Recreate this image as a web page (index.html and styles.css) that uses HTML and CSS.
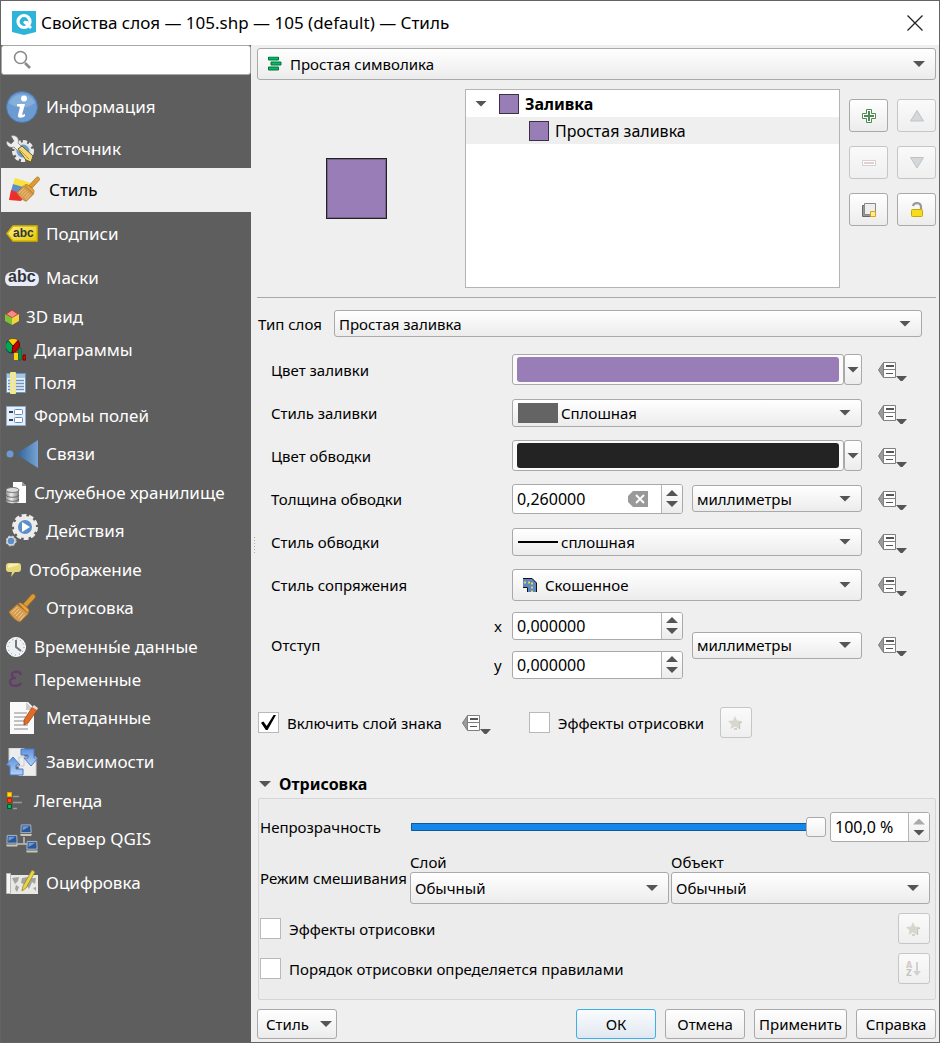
FILE: index.html
```html
<!DOCTYPE html>
<html lang="ru">
<head>
<meta charset="utf-8">
<title>Свойства слоя</title>
<link rel="stylesheet" href="styles.css">
</head>
<body>
<svg class="defs" width="0" height="0" aria-hidden="true">
  <defs>
    <linearGradient id="gold" x1="0" y1="0" x2="1" y2="1"><stop offset="0" stop-color="#fbf08a"/><stop offset="1" stop-color="#e6c800"/></linearGradient>
    <linearGradient id="blue" x1="0" y1="0" x2="1" y2="0"><stop offset="0" stop-color="#2f5f97"/><stop offset="1" stop-color="#76a3d3"/></linearGradient>
    <linearGradient id="metal" x1="0" y1="0" x2="1" y2="0"><stop offset="0" stop-color="#8c8c8c"/><stop offset=".4" stop-color="#efefef"/><stop offset="1" stop-color="#7c7c7c"/></linearGradient>
    <linearGradient id="arrow" x1="0" y1="0" x2="0" y2="1"><stop offset="0" stop-color="#5e93dd"/><stop offset="1" stop-color="#b5d0f5"/></linearGradient>
    <symbol id="ddo" viewBox="0 0 30 22">
      <path d="M5.500 3.500v15L.5 11z" fill="#9b9b9b" stroke="#7d7d7d"/>
      <path d="M5.500 3.500h12v15h-12z" fill="#fff" stroke="#808080"/>
      <path d="M5.500 10.500h12" stroke="#808080"/>
      <path d="M8 7h8" stroke="#555" stroke-width="2"/><path d="M8 14.500h7" stroke="#555"/>
      <path d="M18 17h11l-5.500 6z" fill="#555"/>
    </symbol>
    <symbol id="star" viewBox="0 0 16 16">
      <path d="M7 1l2 4.500 5 .5-3.500 3.500 1 4.500L7 11.500 2.500 14l1-4.500L0 6l5-.5z" fill="#d9d7cb"/>
      <path d="M6 14h3M11.500 14V9.500c0-2 1-2.500 2.500-2" fill="none" stroke="#c6c6c6" stroke-width="1.300"/>
    </symbol>
    <symbol id="brush" viewBox="0 0 32 32">
      <path d="M26 2c2-2 5 0 4 3l-9 10-4-3z" fill="#dc9a35" stroke="#a46c1e" stroke-width=".8"/>
      <path d="M12 11c2-1 4 0 5 1l5 4c2 2 2 4 0 6z" fill="#e8a540" stroke="#a46c1e" stroke-width=".8"/>
      <path d="M11 12l12 10-9 9c-3 0-10-6-12-11z" fill="#d59a4c" stroke="#a06c25" stroke-width=".8"/>
      <path d="M11 15l-6 6M13 17l-6 6M15 19l-6 6M17 21l-5 6M19 23l-5 6" stroke="#f0d2a2"/>
    </symbol>
    <symbol id="pc" viewBox="0 0 14 14">
      <path d="M1.500.5h11l.5 9H1z" fill="#2c5797" stroke="#b8c4d2"/><path d="M3 2h8l-8 5z" fill="#6f9bd1"/>
      <path d="M0 11h14l-1 2.500H1z" fill="#c9c6b2"/>
    </symbol>
  </defs>
</svg>

<div class="window">
  <header class="titlebar">
    <svg width="24" height="24" viewBox="0 0 24 24" aria-hidden="true"><path d="M0 0h24v21l-4 1-8 2-8-2-4-1z" fill="#2fb4d9"/><circle cx="12" cy="10.500" r="6" fill="none" stroke="#fff" stroke-width="3.200"/><path d="M12 10.500l7 6.500" stroke="#fff" stroke-width="3"/><path d="M12 11h4" stroke="#fff" stroke-width="2"/></svg>
    <h1 class="title">Свойства слоя — 105.shp — 105 (default) — Стиль</h1>
    <button class="close" type="button" aria-label="Закрыть"><svg width="16" height="16" viewBox="0 0 16 16"><path d="M.5.5l15 15M15.500.5l-15 15" stroke="#222" stroke-width="1.300"/></svg></button>
  </header>

  <div class="body">
    <aside class="sidebar">
      <label class="search">
        <svg width="20" height="20" viewBox="0 0 20 20" aria-hidden="true"><circle cx="7.500" cy="7.500" r="6" fill="none" stroke="#8a8a8a" stroke-width="1.600"/><path d="M12 13l5 5" stroke="#8a8a8a" stroke-width="2.600"/></svg>
        <input type="text" aria-label="Поиск">
      </label>
      <nav class="pages">
        <button class="page tall" type="button"><svg width="32" height="32" viewBox="0 0 32 32"><circle cx="16" cy="16" r="15.500" fill="#6b9bd0" stroke="#4879b4"/><path d="M3 12a14 14 0 0 1 26 0c-8 6-18 6-26 0z" fill="#86aedb"/><circle cx="18" cy="7.500" r="3" fill="#fff"/><path d="M11 13h8l-3 11 3-1v2c-2 2-8 3-7-1l2-8-3-1z" fill="#fff"/></svg>Информация</button>
        <button class="page mid" type="button"><svg width="28" height="28" viewBox="0 0 28 28"><circle cx="17" cy="16" r="9" fill="#6b9bd0" stroke="#ececec" stroke-width="4" stroke-dasharray="4 2"/><circle cx="17" cy="16" r="7.500" fill="#6b9bd0" stroke="#e4e4e4" stroke-width="2"/><path d="M5 1c5-2 9 3 7 7l8 8-4 4-8-8C4 14-1 10 1 6l4 3 3-3z" fill="#eee" stroke="#777" stroke-width=".7"/><path d="M12 14l4-3 11 10-2 6-5-2z" fill="#f1d978" stroke="#6b5a20"/><path d="M14 15l9 9" stroke="#b99b3c"/></svg>Источник</button>
        <button class="page tall current" type="button" aria-current="page"><svg width="35" height="32" viewBox="0 0 35 32"><path d="M9 4l16 5-4 5L7 10z" fill="#f9e23c"/><path d="M7 10l14 4-3 7L5 17z" fill="#5f8fca"/><path d="M5 16l14 5-4 6-12-1z" fill="#ef2d2d"/><use href="#brush" x="9" y="2" width="26" height="26"/></svg>Стиль</button>
        <button class="page tall" type="button"><svg width="32" height="18" viewBox="0 0 32 18"><path d="M7 1h24v15H7L1 8.500z" fill="url(#gold)" stroke="#d5b400" stroke-width="1.500"/><text x="7" y="12" class="abc-label">abc</text></svg>Подписи</button>
        <button class="page tall" type="button"><svg class="wide-icon" width="34" height="24" viewBox="0 0 34 24"><path d="M5 20q-5-1-5-7t6-7h4q1-4 5-4t6 4h7q6 1 6 7t-5 7z" fill="#e8ecfa"/><text x="3" y="16" class="abc-mask">abc</text></svg>Маски</button>
        <button class="page" type="button"><svg class="cube" width="14" height="16" viewBox="0 0 14 16"><path d="M7 1l6 4-6 4-6-4z" fill="#f38b8b" stroke="#b33"/><path d="M0 5l7 4v7l-7-4z" fill="#7bc331"/><path d="M14 5L7 9v7l7-4z" fill="#f3d53b"/></svg>3D вид</button>
        <button class="page" type="button"><svg width="20" height="22" viewBox="0 0 20 22"><path d="M7 7L2 1.500a8 8 0 0 1 10 0z" fill="#ffcf00" stroke="#8a6d00" stroke-width=".6"/><path d="M7 7L2 1.500A7 7 0 0 0 6 14z" fill="#00a651" stroke="#045"/><path d="M7 7l5-5.500c3 4 2 10-6 12.500z" fill="#c30000" stroke="#600"/><path d="M8 14h4v7H8z" fill="#ffcf00"/><path d="M13 9h2v12h-2z" fill="#0b6" stroke="#063"/><path d="M17 16h3v5h-3z" fill="#d00" stroke="#700"/></svg>Диаграммы</button>
        <button class="page" type="button"><svg width="20" height="22" viewBox="0 0 20 22"><path d="M.5 1.500h19v19H.5z" fill="#edf2f7" stroke="#6d95c0"/><path d="M1 2h18v4H1z" fill="#a5c5e6"/><path d="M2 8.500h16M2 11.500h16M2 14.500h16M2 17.500h16" stroke="#6d95c0" stroke-width="1.300"/><path d="M4.500.5h5v21h-5z" fill="#e9e3c0" stroke="#f6ee59"/></svg>Поля</button>
        <button class="page" type="button"><svg width="20" height="20" viewBox="0 0 20 20"><path d="M.5.5h19v19H.5z" fill="#e9eff5" stroke="#8ab0d8"/><path d="M3 6h4M3 14h4" stroke="#345" stroke-width="2"/><rect x="8.500" y="3.500" width="8" height="5" rx="1" fill="#fff" stroke="#5b8cc4"/><rect x="8.500" y="11.500" width="8" height="5" rx="1" fill="#fff" stroke="#5b8cc4"/></svg>Формы полей</button>
        <button class="page tall" type="button"><svg width="32" height="28" viewBox="0 0 32 28"><circle cx="4" cy="14" r="3.500" fill="#6b9bd0"/><path d="M32 0v28L10 14z" fill="url(#blue)"/></svg>Связи</button>
        <button class="page" type="button"><svg width="20" height="22" viewBox="0 0 20 22"><path d="M7 0h9l4 4v17H7z" fill="#fff"/><path d="M16 0v4h4z" fill="#999"/><path d="M0 8v11c0 3 13 3 13 0V8z" fill="url(#metal)"/><ellipse cx="6.500" cy="8" rx="6.500" ry="2.500" fill="#ddd" stroke="#777"/><path d="M0 13c1 3 12 3 13 0M0 17c1 3 12 3 13 0" fill="none" stroke="#666"/></svg>Служебное хранилище</button>
        <button class="page tall" type="button"><svg width="32" height="34" viewBox="0 0 32 34"><circle cx="19" cy="13" r="11" fill="none" stroke="#ececec" stroke-width="4" stroke-dasharray="4.600 2.300"/><circle cx="19" cy="13" r="9" fill="#5c8fc9" stroke="#ececec" stroke-width="4"/><path d="M16 8l8 5-8 5z" fill="#fff"/><circle cx="5" cy="27" r="4" fill="#5c8fc9" stroke="#ddd" stroke-width="1.500"/><circle cx="5" cy="27" r="5" fill="none" stroke="#ddd" stroke-dasharray="2 2"/></svg>Действия</button>
        <button class="page" type="button"><svg width="15" height="16" viewBox="0 0 15 16"><path d="M3 1h9q3 0 3 3v3q0 3-3 3H9l-4 5 1-5H3Q0 10 0 7V4q0-3 3-3z" fill="#e6d878"/><path d="M2 4q0-2 2-2h7q2 0 2 1l-11 3z" fill="#f6f0b4"/></svg>Отображение</button>
        <button class="page tall" type="button"><svg width="32" height="32" viewBox="0 0 32 32"><use href="#brush" x="1" y="1" width="30" height="30"/></svg>Отрисовка</button>
        <button class="page" type="button"><svg width="20" height="20" viewBox="0 0 20 20"><circle cx="10" cy="10" r="9.500" fill="#eef1f3" stroke="#fff"/><circle cx="10" cy="10" r="8" fill="none" stroke="#6a93bd" stroke-dasharray="1 3.200"/><path d="M10 3v7l5 4" fill="none" stroke="#777" stroke-width="2"/></svg>Временны́е данные</button>
        <button class="page" type="button"><svg width="20" height="22" viewBox="0 0 20 22"><path d="M15 6c-1-5-10-4-9 0 0 2 2 3 4 3-4 0-6 2-6 4 0 5 9 5 11 1" fill="none" stroke="#653a6c" stroke-width="2.200"/></svg>Переменные</button>
        <button class="page tall" type="button"><svg width="32" height="32" viewBox="0 0 32 32"><path d="M4 0h18l6 6v26H4z" fill="#fafafa"/><path d="M20 0v8h8z" fill="#ccc"/><path d="M8 11h13M8 15h12M8 19h11M8 23h14M8 27h14" stroke="#b0b0b0" stroke-width="1.500"/><path d="M27 4l5 3-10 14-4 2v-5z" fill="#e06a26" stroke="#a8481a" stroke-width=".8"/><path d="M28 3l4 3-1 2-5-3z" fill="#ddd"/></svg>Метаданные</button>
        <button class="page tall" type="button"><svg width="32" height="28" viewBox="0 0 32 28"><path d="M3 0h15v18H3zM13 9h17v19H13z" fill="#ededed" stroke="#ccc"/><path d="M15 1h13v9h4l-7 8-7-8h4V7h-7z" fill="url(#arrow)" stroke="#4a7bc4"/><path d="M7 9l7 8h-4v4h7v6H4V17H0z" fill="url(#arrow)" stroke="#4a7bc4"/></svg>Зависимости</button>
        <button class="page" type="button"><svg width="20" height="20" viewBox="0 0 20 20"><path d="M7 5.500h6M7 11.500h9M7 17.500h4" stroke="#999" stroke-width="1.500"/><path d="M1.500 1.500h4v4h-4z" fill="#ffe600" stroke="#f90"/><path d="M1.500 7.500h4v4h-4z" fill="#f40" stroke="#b20"/><path d="M1.500 13.500h4v4h-4z" fill="#0b5" stroke="#053"/></svg>Легенда</button>
        <button class="page tall" type="button"><svg width="32" height="30" viewBox="0 0 32 30"><path d="M18 13v7M10 20h14" stroke="#aaa" stroke-width="2"/><use href="#pc" x="14" y="0" width="12" height="13"/><use href="#pc" x="0" y="10" width="12" height="14"/><use href="#pc" x="20" y="16" width="12" height="14"/></svg>Сервер QGIS</button>
        <button class="page tall" type="button"><svg width="32" height="26" viewBox="0 0 32 26"><path d="M2 5h30v19H2z" fill="#e9e9e4"/><path d="M.5 3.500h4v20h-4z" fill="#f7f7f7" stroke="#bbb"/><path d="M6 8l7-1-1 4-3 3zM10 15l3 2-2 5-2-3zM16 8l6-1 5 3-4 9-3-4-5-2zM24 8h6l-1 6-3-2zM27 18l3-1v4z" fill="#a3a3a0"/><path d="M26 0l3 2-9 16-4 3 1-5z" fill="#e8d34a" stroke="#97862a" stroke-width=".8"/></svg>Оцифровка</button>
      </nav>
    </aside>

    <main class="main">
      <span class="combo big with-icon">
        <svg class="lead" width="15" height="15" viewBox="0 0 15 15"><path d="M1.500.5h10v3h-10zM4 5.500h10v3H4zM1.500 10.500h10v3h-10z" fill="#0b6" stroke="#04713b"/></svg>
        <select aria-label="Тип символики"><option>Простая символика</option></select>
      </span>

      <section class="symbol">
        <div class="preview"><div class="swatch"></div></div>
        <ul class="tree">
          <li class="node root"><i class="caret"></i><i class="chip"></i><b>Заливка</b></li>
          <li class="node child"><i class="chip"></i>Простая заливка</li>
        </ul>
        <div class="tools">
          <button class="tool" type="button" aria-label="Добавить"><svg width="16" height="16" viewBox="0 0 16 16"><path d="M5.500 1.500h5v4h4v5h-4v4h-5v-4h-4v-5h4z" fill="#fff" stroke="#4f8a55"/><path d="M8 3v10M3 8h10" stroke="#4f8a55" stroke-width="2"/></svg></button>
          <button class="tool" type="button" aria-label="Выше" disabled><svg width="16" height="16" viewBox="0 0 16 16"><path d="M8 2.500l6.500 10.500h-13z" fill="#d5d8da" stroke="#c0c3c5"/></svg></button>
          <button class="tool" type="button" aria-label="Удалить" disabled><svg width="16" height="16" viewBox="0 0 16 16"><path d="M1.500 5.500h13v5h-13z" fill="#fff" stroke="#d9cfcf"/><path d="M3 8h10" stroke="#e0d2d2" stroke-width="2"/></svg></button>
          <button class="tool" type="button" aria-label="Ниже" disabled><svg width="16" height="16" viewBox="0 0 16 16"><path d="M8 13L1.500 2.500h13z" fill="#d5d8da" stroke="#c0c3c5"/></svg></button>
          <button class="tool" type="button" aria-label="Дублировать"><svg width="16" height="16" viewBox="0 0 16 16"><path d="M1.500 3.500h11v11h-11z" fill="#999a93" stroke="#666"/><path d="M3.500 1.500h11v11h-11z" fill="#eee" stroke="#888"/><path d="M9.500 9.500h5v5h-5z" fill="#fbe9a6" stroke="#d7a800"/></svg></button>
          <button class="tool" type="button" aria-label="Блокировка цвета"><svg width="16" height="16" viewBox="0 0 16 16"><path d="M4 4c1-4 8-4 8 1v3" fill="none" stroke="#999" stroke-width="2.200"/><rect x="2.500" y="7.500" width="11" height="7" rx="1" fill="#f5dc1e" stroke="#c9a800"/></svg></button>
        </div>
      </section>

      <section class="layer">
        <div class="type-row">
          <label for="layer-type">Тип слоя</label>
          <span class="combo slim"><select id="layer-type"><option>Простая заливка</option></select></span>
        </div>

        <div class="form">
          <span>Цвет заливки</span>
          <div class="color"><button class="color-btn" type="button" aria-label="Цвет заливки"><i class="fill violet"></i></button><button class="drop" type="button" aria-label="Меню цвета заливки"><i class="caret"></i></button></div>
          <button class="ddo" type="button" aria-label="Переопределение"><svg width="30" height="22"><use href="#ddo"/></svg></button>

          <label for="fill-style">Стиль заливки</label>
          <span class="combo with-swatch"><i class="lead gray"></i><select id="fill-style"><option>Сплошная</option></select></span>
          <button class="ddo" type="button" aria-label="Переопределение"><svg width="30" height="22"><use href="#ddo"/></svg></button>

          <span>Цвет обводки</span>
          <div class="color"><button class="color-btn" type="button" aria-label="Цвет обводки"><i class="fill dark"></i></button><button class="drop" type="button" aria-label="Меню цвета обводки"><i class="caret"></i></button></div>
          <button class="ddo" type="button" aria-label="Переопределение"><svg width="30" height="22"><use href="#ddo"/></svg></button>

          <label for="stroke-width">Толщина обводки</label>
          <div class="pair">
            <div class="spin roomy"><input id="stroke-width" type="text" value="0,260000"><button class="clear" type="button" aria-label="Очистить"><svg width="20" height="16" viewBox="0 0 20 16"><path d="M5 0h15v16H5L0 11V5z" fill="#999"/><path d="M8 4l8 8M16 4l-8 8" stroke="#fff" stroke-width="1.800"/></svg></button><span class="steps"><button class="up" type="button" aria-label="Больше"></button><button class="down" type="button" aria-label="Меньше"></button></span></div>
            <span class="combo slim"><select aria-label="Единицы толщины"><option>миллиметры</option></select></span>
          </div>
          <button class="ddo" type="button" aria-label="Переопределение"><svg width="30" height="22"><use href="#ddo"/></svg></button>

          <label for="stroke-style">Стиль обводки</label>
          <span class="combo with-swatch"><i class="lead line"></i><select id="stroke-style"><option>сплошная</option></select></span>
          <button class="ddo" type="button" aria-label="Переопределение"><svg width="30" height="22"><use href="#ddo"/></svg></button>

          <label for="join-style">Стиль сопряжения</label>
          <span class="combo big with-icon"><svg class="lead" width="16" height="16" viewBox="0 0 16 16"><path d="M1 1h9l5 5v9H6V10H1z" fill="#5b87c5"/><path d="M1 1.500h9l4.500 4.500v9M1 10.500h4.500V15" fill="none" stroke="#111"/><path d="M2 5.500h8V15" fill="none" stroke="#f2d33a" stroke-width="2" stroke-dasharray="2 2"/></svg><select id="join-style"><option>Скошенное</option></select></span>
          <button class="ddo" type="button" aria-label="Переопределение"><svg width="30" height="22"><use href="#ddo"/></svg></button>

          <span>Отступ</span>
          <div class="pair">
            <div class="offsets">
              <div class="axis"><label for="offset-x">x</label><div class="spin"><input id="offset-x" type="text" value="0,000000"><span class="steps"><button class="up" type="button" aria-label="Больше"></button><button class="down" type="button" aria-label="Меньше"></button></span></div></div>
              <div class="axis"><label for="offset-y">y</label><div class="spin"><input id="offset-y" type="text" value="0,000000"><span class="steps"><button class="up" type="button" aria-label="Больше"></button><button class="down" type="button" aria-label="Меньше"></button></span></div></div>
            </div>
            <span class="combo slim"><select aria-label="Единицы отступа"><option>миллиметры</option></select></span>
          </div>
          <button class="ddo" type="button" aria-label="Переопределение"><svg width="30" height="22"><use href="#ddo"/></svg></button>
        </div>

        <div class="enable-row">
          <label class="check"><input type="checkbox" checked>Включить слой знака</label>
          <button class="ddo" type="button" aria-label="Переопределение"><svg width="30" height="22"><use href="#ddo"/></svg></button>
          <label class="check effects"><input type="checkbox">Эффекты отрисовки</label>
          <button class="small-tool" type="button" aria-label="Настроить эффекты" disabled><svg width="16" height="16"><use href="#star"/></svg></button>
        </div>
      </section>

      <section class="render">
        <h2 class="group-title"><i class="caret"></i>Отрисовка</h2>
        <div class="group">
          <div class="opacity-row">
            <label for="opacity">Непрозрачность</label>
            <input id="opacity" class="slider" type="range" min="0" max="100" value="100">
            <div class="spin roomy percent"><input type="text" value="100,0 %" aria-label="Непрозрачность, %"><span class="steps"><button class="up" type="button" aria-label="Больше" disabled></button><button class="down" type="button" aria-label="Меньше"></button></span></div>
          </div>
          <div class="blend-row">
            <span>Режим смешивания</span>
            <label class="blend">Слой<span class="combo big"><select><option>Обычный</option></select></span></label>
            <label class="blend">Объект<span class="combo big"><select><option>Обычный</option></select></span></label>
          </div>
          <div class="option-row">
            <label class="check"><input type="checkbox">Эффекты отрисовки</label>
            <button class="small-tool" type="button" aria-label="Настроить эффекты" disabled><svg width="16" height="16"><use href="#star"/></svg></button>
          </div>
          <div class="option-row">
            <label class="check"><input type="checkbox">Порядок отрисовки определяется правилами</label>
            <button class="small-tool" type="button" aria-label="Настроить порядок" disabled><svg width="16" height="16" viewBox="0 0 16 16"><text x="0" y="7" class="sort-top">A</text><text x="0" y="15" class="sort-low">Z</text><path d="M10 1h2v9h3l-4 5-4-5h3z" fill="#cfd2d4"/></svg></button>
          </div>
        </div>
      </section>

      <footer class="actions">
        <button class="btn menu" type="button">Стиль<i class="caret"></i></button>
        <button class="btn primary" type="button">ОК</button>
        <button class="btn" type="button">Отмена</button>
        <button class="btn" type="button">Применить</button>
        <button class="btn" type="button">Справка</button>
      </footer>
      <i class="splitter"></i>
    </main>
  </div>
</div>
</body>
</html>
```
FILE: styles.css
```css
* { box-sizing: border-box; }
body {
  margin: 0;
  font: 15px/20px "Noto Sans", "Open Sans", sans-serif;
  color: #000;
  background: #efefef;
}
button, input, select { font: inherit; color: inherit; margin: 0; }
button { padding: 0; border: 0; background: none; }
svg { display: block; flex: none; }
.defs { position: absolute; }

.window {
  display: flex;
  flex-direction: column;
  min-height: 100vh;
  border: 1px solid #646464;
}
.titlebar {
  display: flex;
  align-items: center;
  height: 44px;
  padding: 0 16px 0 11px;
  background: #fff;
}
.title { flex: 1; margin: 0 0 0 5px; font-size: 17px; font-weight: 400; line-height: 24px; }
.body { display: flex; flex: 1; }

/* Sidebar */
.sidebar { flex: none; width: 250px; background: #5e5e5e; }
.search {
  display: flex;
  align-items: center;
  height: 30px;
  padding-left: 11px;
  border: 1px solid #a8a8a8;
  border-radius: 3px;
  background: #fff;
}
.search input { flex: 1; min-width: 0; border: 0; outline: 0; background: none; }
.pages { padding-top: 10px; }
.page {
  display: flex;
  align-items: center;
  gap: 8px;
  width: 100%;
  height: 33px;
  padding-left: 5px;
  font-size: 17px;
  line-height: 24px;
  color: #fff;
  text-align: left;
}
.page.mid { height: 39px; }
.page.tall { height: 44px; }
.page.current { background: #efefef; color: #000; }
.wide-icon, .cube { margin-left: -1px; margin-right: -1px; }
.abc-label { font: bold 12px "Liberation Sans", sans-serif; fill: #333; }
.abc-mask { font: bold 16px "Liberation Sans", sans-serif; fill: #333; }

/* Shared controls */
.caret {
  display: block;
  flex: none;
  width: 12px;
  height: 6px;
  background: #555;
  clip-path: polygon(0 0, 100% 0, 50% 100%);
}
.combo { position: relative; display: block; min-width: 0; }
.combo select {
  display: block;
  width: 100%;
  height: 28px;
  padding: 0 28px 0 4px;
  border: 1px solid #a9a9a9;
  border-radius: 3px;
  background: linear-gradient(#fff, #ececec);
  appearance: none;
}
.combo::after {
  content: "";
  position: absolute;
  right: 11px;
  top: 50%;
  width: 12px;
  height: 6px;
  margin-top: -3px;
  background: #555;
  clip-path: polygon(0 0, 100% 0, 50% 100%);
  pointer-events: none;
}
.combo.slim select { height: 27px; }
.combo.big select { height: 32px; }
.combo.with-icon select { padding-left: 32px; }
.combo.with-swatch select { padding-left: 48px; }
.lead { position: absolute; left: 10px; top: 50%; transform: translateY(-50%); pointer-events: none; }
.lead.gray { left: 6px; width: 40px; height: 20px; background: #646464; }
.lead.line { left: 6px; width: 40px; height: 2px; background: #000; }

.spin {
  display: flex;
  width: 171px;
  height: 28px;
  border: 1px solid #a9a9a9;
  border-radius: 3px;
  background: #fff;
  overflow: hidden;
}
.spin.roomy { height: 30px; }
.spin.percent { width: 100px; }
.spin input { flex: 1; min-width: 0; padding: 0 0 0 4px; border: 0; outline: 0; background: none; font-size: 16px; }
.clear { display: flex; align-items: center; margin-right: 13px; }
.steps {
  display: flex;
  flex-direction: column;
  width: 21px;
  border-left: 1px solid #b5b5b5;
  background: linear-gradient(#fff, #ececec);
}
.up, .down { display: flex; flex: 1; justify-content: center; }
.up { align-items: flex-end; padding-bottom: 2px; }
.down { align-items: flex-start; padding-top: 3px; }
.up::before, .down::before { content: ""; width: 12px; height: 6px; background: #555; }
.up::before { clip-path: polygon(50% 0, 100% 100%, 0 100%); }
.down::before { clip-path: polygon(0 0, 100% 0, 50% 100%); }
.up:disabled::before { background: #aaa; }

.check { display: flex; align-items: center; gap: 8px; }
.check input {
  flex: none;
  display: grid;
  place-items: center;
  width: 21px;
  height: 21px;
  border: 1px solid #b9b9b9;
  background: #fff;
  appearance: none;
}
.check input:checked::before {
  content: "";
  width: 15px;
  height: 15px;
  background: #000;
  clip-path: polygon(0 52%, 16% 44%, 38% 74%, 84% 0, 100% 0, 44% 100%, 32% 100%);
}

.tool, .small-tool {
  display: grid;
  place-items: center;
  width: 39px;
  height: 33px;
  border: 1px solid #a9a9a9;
  border-radius: 3px;
  background: linear-gradient(#fff, #ececec);
}
.small-tool { width: 32px; height: 31px; }
.tool:disabled, .small-tool:disabled { border-color: #c6c6c6; background: linear-gradient(#fafafa, #efefef); }

/* Main panel */
.main {
  position: relative;
  display: flex;
  flex: 1;
  flex-direction: column;
  min-width: 0;
  padding: 3px 3px 2px 6px;
}
.splitter {
  position: absolute;
  left: 3px;
  top: 492px;
  width: 1px;
  height: 17px;
  background: repeating-linear-gradient(#aaa 0 1px, transparent 1px 3px);
}
.symbol { display: flex; padding: 9px 0; border-bottom: 1px solid #a9a9a9; }
.preview { display: grid; flex: none; place-items: center; width: 199px; margin-right: 9px; }
.swatch { width: 61px; height: 61px; border: 1px solid #232323; background: #987db7; box-shadow: inset 0 0 0 1px #75618c; }
.tree {
  flex: 1;
  height: 199px;
  margin: 0 9px 0 0;
  padding: 0;
  border: 1px solid #b4b4b4;
  background: #fff;
  list-style: none;
}
.node { display: flex; align-items: center; gap: 6px; height: 27px; padding-left: 9px; font-size: 16px; }
.root .chip { margin-left: 6px; }
.child { padding-left: 63px; background: #efefef; }
.chip { width: 20px; height: 20px; border: 1px solid #3b3147; background: #987db7; }
.tools {
  display: grid;
  grid-template-columns: 39px 39px;
  gap: 14px 9px;
  align-content: start;
  padding-top: 10px;
}

.type-row { display: flex; align-items: center; gap: 9px; padding: 12px 14px 0 1px; }
.type-row label { min-width: 67px; }
.type-row .combo { flex: 1; }
.form {
  display: grid;
  grid-template-columns: 241px 1fr 74px;
  grid-template-rows: repeat(6, 43px) 78px;
  align-items: center;
  padding: 11px 0 0 14px;
}
.form .ddo { padding-left: 16px; }
.form > .combo, .color, .pair { min-width: 0; }
.color { display: flex; height: 31px; }
.color-btn { flex: 1; padding: 2px 4px; border: 1px solid #a9a9a9; border-radius: 3px; background: #fafafa; }
.fill { display: block; height: 25px; border-radius: 3px; }
.violet { background: #987db7; }
.dark { background: #232323; }
.drop {
  display: grid;
  place-items: center;
  width: 18px;
  border: 1px solid #a9a9a9;
  border-radius: 3px;
  background: linear-gradient(#fff, #ececec);
}
.pair { display: flex; align-items: center; gap: 9px; }
.pair .combo { flex: 1; }
.offsets { display: grid; gap: 11px; margin-left: -18px; }
.axis { display: flex; align-items: center; }
.axis label { width: 18px; }

.enable-row { display: flex; align-items: center; height: 31px; margin-top: 23px; padding-left: 1px; }
.enable-row .ddo { margin: 0 37px 0 20px; }
.enable-row .small-tool { margin-left: 16px; }

.group-title { display: flex; align-items: center; gap: 8px; margin: 36px 0 4px 2px; font-size: 16px; line-height: 20px; }
.group { margin-left: 1px; padding: 13px 5px 15px 1px; border: 1px solid #d6d6d6; border-radius: 2px; background: #ececec; }
.opacity-row { display: grid; grid-template-columns: 151px 1fr 100px; column-gap: 4px; align-items: center; }
.opacity-row label { margin-right: -4px; }
.slider { width: calc(100% + 4px); height: 20px; margin-left: -4px; background: none; appearance: none; }
.slider::-webkit-slider-runnable-track { height: 8px; border-radius: 1px; background: #1488ea; box-shadow: inset 0 0 0 1px #0f5a9c; }
.slider::-webkit-slider-thumb {
  width: 20px;
  height: 20px;
  margin-top: -6px;
  border: 1px solid #a9a9a9;
  border-radius: 3px;
  background: linear-gradient(#fff, #f0f0f0);
  appearance: none;
}
.blend-row { display: grid; grid-template-columns: 148px 1fr 1fr; gap: 2px; align-items: center; margin: 10px 0 9px; }
.blend { display: block; }
.option-row { display: flex; align-items: center; justify-content: space-between; height: 31px; }
.option-row + .option-row { margin-top: 9px; }
.sort-top, .sort-low { font: bold 8px "DejaVu Sans", sans-serif; fill: #d6c8c4; }
.sort-low { fill: #c4c4c4; }

.actions { display: flex; gap: 9px; padding-top: 9px; }
.btn {
  min-width: 80px;
  height: 30px;
  padding: 0 4px;
  border: 1px solid #a9a9a9;
  border-radius: 3px;
  background: linear-gradient(#fff, #ececec);
}
.btn.menu { display: flex; align-items: center; justify-content: space-between; margin-right: auto; padding: 0 4px 0 8px; }
.btn.primary { border-color: #3daee9; background: linear-gradient(#fafcfe, #e0e8f0); }
```
